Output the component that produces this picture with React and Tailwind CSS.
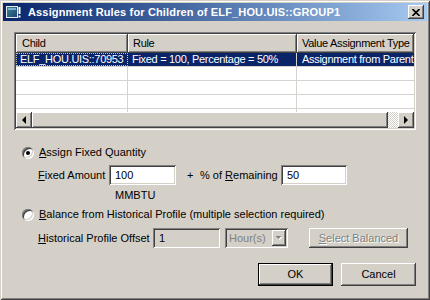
import React from 'react';

const raised = 'shadow-[inset_-1px_-1px_#404040,inset_1px_1px_#ffffff,inset_-2px_-2px_#808080,inset_2px_2px_#d4d0c8]';
const sunken = 'shadow-[inset_1px_1px_#808080,inset_-1px_-1px_#ffffff,inset_2px_2px_#404040,inset_-2px_-2px_#d4d0c8]';
const headerCell = 'shadow-[inset_-1px_-1px_#404040,inset_1px_1px_#ffffff,inset_-2px_-2px_#808080]';

const Radio = ({ checked }) => (
  <div className={`w-[12px] h-[12px] rounded-full bg-white flex items-center justify-center ${sunken}`}>
    {checked && <div className="w-[4px] h-[4px] rounded-full bg-black" />}
  </div>
);

const Arrow = ({ dir }) => (
  <svg width="8" height="8" viewBox="0 0 8 8">
    {dir === 'left' ? <path d="M2 4 L6 0 L6 8 Z" fill="#000" /> : <path d="M6 4 L2 0 L2 8 Z" fill="#000" />}
  </svg>
);

const TitleIcon = () => (
  <svg width="15" height="12" viewBox="0 0 15 12">
    <defs>
      <linearGradient id="ti" x1="0" y1="0" x2="1" y2="1">
        <stop offset="0" stopColor="#3a8a8a" />
        <stop offset="1" stopColor="#1c3f7a" />
      </linearGradient>
    </defs>
    <rect x="0.5" y="0.5" width="11" height="11" fill="url(#ti)" stroke="#e8e8e8" />
    <rect x="2" y="2" width="8" height="2" fill="#7ab0d0" />
    <rect x="12.5" y="1" width="2" height="7" fill="#ffffff" />
    <rect x="12.5" y="9.5" width="2" height="2" fill="#ffffff" />
  </svg>
);

const rows = [
  { child: 'ELF_HOU.UIS::70953', rule: 'Fixed = 100, Percentage = 50%', type: 'Assignment from Parent', sel: true },
  { child: '', rule: '', type: '' },
  { child: '', rule: '', type: '' },
  { child: '', rule: '', type: '' },
  { child: '', rule: '', type: '' },
];

export default function App() {
  return (
    <div className="w-[430px] h-[300px] bg-[#d4d0c8] p-[3px] flex flex-col font-['Liberation_Sans',Arial,sans-serif] text-[11px] leading-[13px] text-black shadow-[inset_1px_1px_#d4d0c8,inset_-1px_-1px_#404040,inset_2px_2px_#ffffff,inset_-2px_-2px_#808080] overflow-hidden">
      {/* title bar */}
      <div className="h-[18px] flex items-center bg-gradient-to-r from-[#0a246a] to-[#a6caf0] pl-[3px] pr-[3px]">
        <TitleIcon />
        <span className="ml-[7px] font-bold text-white whitespace-nowrap tracking-[0.15px]">Assignment Rules for Children of ELF_HOU.UIS::GROUP1</span>
        <div className={`ml-auto w-[16px] h-[14px] bg-[#d4d0c8] flex items-center justify-center ${raised}`}>
          <svg width="8" height="7" viewBox="0 0 8 7">
            <path d="M0.5 0 L7.5 7 M7.5 0 L0.5 7" stroke="#000" strokeWidth="1.6" />
          </svg>
        </div>
      </div>

      <div className="flex-1 flex flex-col">
        {/* list view */}
        <div className={`mt-[11px] ml-[11px] w-[402px] h-[98px] bg-white p-[2px] flex flex-col tracking-[-0.3px] ${sunken}`}>
          <div className="h-[19px] flex bg-[#d4d0c8] shrink-0">
            <div className={`w-[112px] pl-[6px] flex items-center ${headerCell}`}>Child</div>
            <div className={`w-[169px] pl-[5px] flex items-center ${headerCell}`}>Rule</div>
            <div className={`w-[117px] pl-[5px] flex items-center whitespace-nowrap overflow-hidden ${headerCell}`}>Value Assignment Type</div>
          </div>
          <div className="flex-1 overflow-hidden">
            {rows.map((r, i) => (
              <div key={i} className={`h-[14px] flex border-b border-[#d6d3ce] ${r.sel ? 'bg-[#0a246a] text-white' : ''}`}>
                <div className={`w-[112px] pl-[3px] flex items-center whitespace-nowrap overflow-hidden border-r border-[#d6d3ce] ${r.sel ? 'border-l border-y border-dotted border-l-[#c0c0a0] border-y-[#c0c0a0]' : ''}`}>{r.child}</div>
                <div className="w-[169px] pl-[4px] flex items-center whitespace-nowrap overflow-hidden border-r border-[#d6d3ce]">{r.rule}</div>
                <div className="w-[117px] pl-[5px] flex items-center whitespace-nowrap overflow-hidden">{r.type}</div>
              </div>
            ))}
          </div>
          <div className="h-[16px] flex shrink-0">
            <div className={`w-[16px] bg-[#d4d0c8] flex items-center justify-center ${raised}`}><Arrow dir="left" /></div>
            <div className={`w-[356px] bg-[#d4d0c8] ${raised}`} />
            <div className="w-[10px] bg-[repeating-conic-gradient(#ffffff_0%_25%,#d4d0c8_0%_50%)] bg-[length:2px_2px]" />
            <div className={`w-[16px] bg-[#d4d0c8] flex items-center justify-center ${raised}`}><Arrow dir="right" /></div>
          </div>
        </div>

        {/* option 1 */}
        <div className="mt-[16px] ml-[19px] h-[13px] flex items-center">
          <Radio checked />
          <span className="ml-[5px]"><u>A</u>ssign Fixed Quantity</span>
        </div>
        <div className="mt-[6px] ml-[35px] h-[20px] flex items-center">
          <span className="w-[71px]"><u>F</u>ixed Amount</span>
          <div className={`w-[67px] h-[20px] bg-white pl-[6px] flex items-center ${sunken}`}>100</div>
          <span className="w-[24px] pl-[11px]">+</span>
          <span className="w-[81px] whitespace-nowrap">% of <u>R</u>emaining</span>
          <div className={`w-[66px] h-[20px] bg-white pl-[6px] flex items-center ${sunken}`}>50</div>
        </div>
        <div className="mt-[4px] ml-[112px] h-[13px] flex items-center">MMBTU</div>

        {/* option 2 */}
        <div className="mt-[6px] ml-[19px] h-[13px] flex items-center">
          <Radio />
          <span className="ml-[5px] whitespace-nowrap"><u>B</u>alance from Historical Profile (multiple selection required)</span>
        </div>
        <div className="mt-[7px] ml-[35px] h-[20px] flex items-center">
          <span className="w-[115px] whitespace-nowrap"><u>H</u>istorical Profile Offset</span>
          <div className={`w-[67px] h-[20px] bg-[#d4d0c8] pl-[6px] flex items-center ${sunken}`}>1</div>
          <div className={`ml-[5px] w-[63px] h-[20px] bg-[#d4d0c8] pl-[4px] pr-[2px] flex items-center text-[#808080] ${sunken}`}>
            <span>Hour(s)</span>
            <div className={`ml-auto w-[14px] h-[16px] bg-[#d4d0c8] flex items-center justify-center ${raised}`}>
              <svg width="8" height="5" viewBox="0 0 8 5">
                <path d="M1.5 1 L7.5 1 L4.5 4 Z" fill="#ffffff" />
                <path d="M0.5 0 L6.5 0 L3.5 3 Z" fill="#808080" />
              </svg>
            </div>
          </div>
          <div className={`ml-[21px] w-[99px] h-[20px] bg-[#d4d0c8] flex items-center justify-center text-[#808080] [text-shadow:1px_1px_#ffffff] ${raised}`}>
            <span><u>S</u>elect Balanced</span>
          </div>
        </div>

        {/* buttons */}
        <div className="mt-[15px] ml-[255px] h-[23px] flex">
          <div className="w-[75px] h-[23px] border border-black">
            <div className={`w-full h-full bg-[#d4d0c8] flex items-center justify-center ${raised}`}>OK</div>
          </div>
          <div className={`ml-[8px] w-[75px] h-[23px] bg-[#d4d0c8] flex items-center justify-center ${raised}`}>Cancel</div>
        </div>
      </div>
    </div>
  );
}
